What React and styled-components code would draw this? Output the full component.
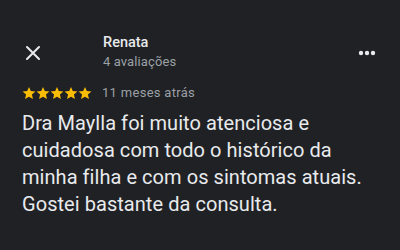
import React from 'react';
import styled, { createGlobalStyle } from 'styled-components';

const Global = createGlobalStyle`
  html, body {
    margin: 0;
    padding: 0;
    background: #202124;
  }
  body {
    font-family: Roboto, "Noto Sans", sans-serif;
  }
`;

const Screen = styled.div`
  width: 400px;
  height: 250px;
  background: #202124;
  box-sizing: border-box;
  padding: 34px 22px 0 22px;
`;

const Header = styled.div`
  display: flex;
  align-items: center;
`;

const IconButton = styled.div`
  width: 22px;
  display: flex;
  align-items: center;
  justify-content: center;
  color: #e8eaed;
`;

const Author = styled.div`
  display: flex;
  flex-direction: column;
  margin-left: 59px;
  flex: 1;
`;

const Name = styled.div`
  font-size: 14.5px;
  line-height: 18px;
  color: #e8eaed;
  font-weight: 500;
`;

const Sub = styled.div`
  font-size: 13px;
  line-height: 19px;
  color: #9aa0a6;
  letter-spacing: 0.1px;
`;

const Meta = styled.div`
  display: flex;
  align-items: center;
  margin-top: 14px;
  gap: 10px;
`;

const Stars = styled.div`
  display: flex;
`;

const Ago = styled.span`
  font-size: 13px;
  color: #9aa0a6;
  letter-spacing: 0.3px;
`;

const Body = styled.p`
  margin: 10px 0 0 0;
  font-size: 20px;
  line-height: 27px;
  color: #e8eaed;
  white-space: nowrap;
  letter-spacing: 0.05px;
`;

const Star = () => (
  <svg width="14" height="14" viewBox="0 0 24 24">
    <path
      fill="#fbbc04"
      d="M12 1.5l3.1 7.2 7.9.7-6 5.2 1.8 7.7L12 18.3l-6.8 4 1.8-7.7-6-5.2 7.9-.7z"
    />
  </svg>
);

const lines = [
  'Dra Maylla foi muito atenciosa e',
  'cuidadosa com todo o histórico da',
  'minha filha e com os sintomas atuais.',
  'Gostei bastante da consulta.',
];

export default function App() {
  return (
    <>
      <Global />
      <Screen>
        <Header>
          <IconButton>
            <svg width="16" height="16" viewBox="0 0 16 16">
              <path d="M2 2L14 14M14 2L2 14" stroke="#e8eaed" strokeWidth="2" strokeLinecap="round" />
            </svg>
          </IconButton>
          <Author>
            <Name>Renata</Name>
            <Sub>4 avaliações</Sub>
          </Author>
          <IconButton>
            <svg width="18" height="6" viewBox="0 0 18 6">
              <circle cx="3" cy="3" r="2.2" fill="#e8eaed" />
              <circle cx="9" cy="3" r="2.2" fill="#e8eaed" />
              <circle cx="15" cy="3" r="2.2" fill="#e8eaed" />
            </svg>
          </IconButton>
        </Header>
        <Meta>
          <Stars>
            {[0, 1, 2, 3, 4].map((i) => (
              <Star key={i} />
            ))}
          </Stars>
          <Ago>11 meses atrás</Ago>
        </Meta>
        <Body>
          {lines.map((l, i) => (
            <React.Fragment key={i}>
              {l}
              {i < lines.length - 1 && <br />}
            </React.Fragment>
          ))}
        </Body>
      </Screen>
    </>
  );
}
